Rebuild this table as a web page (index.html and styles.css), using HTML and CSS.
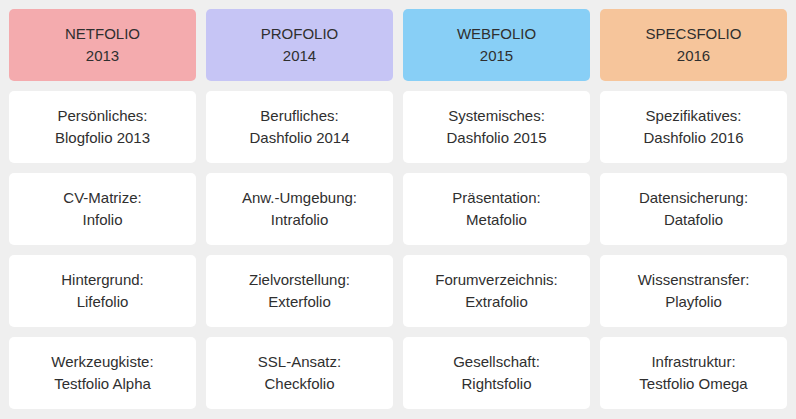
FILE: index.html
```html
<!DOCTYPE html>
<html lang="de">
<head>
<meta charset="utf-8">
<link rel="stylesheet" href="styles.css">
</head>
<body>
<div class="grid">
  <div class="card head h1">NETFOLIO<br>2013</div>
  <div class="card head h2">PROFOLIO<br>2014</div>
  <div class="card head h3">WEBFOLIO<br>2015</div>
  <div class="card head h4">SPECSFOLIO<br>2016</div>

  <div class="card">Persönliches:<br>Blogfolio 2013</div>
  <div class="card">Berufliches:<br>Dashfolio 2014</div>
  <div class="card">Systemisches:<br>Dashfolio 2015</div>
  <div class="card">Spezifikatives:<br>Dashfolio 2016</div>

  <div class="card">CV-Matrize:<br>Infolio</div>
  <div class="card">Anw.-Umgebung:<br>Intrafolio</div>
  <div class="card">Präsentation:<br>Metafolio</div>
  <div class="card">Datensicherung:<br>Datafolio</div>

  <div class="card">Hintergrund:<br>Lifefolio</div>
  <div class="card">Zielvorstellung:<br>Exterfolio</div>
  <div class="card">Forumverzeichnis:<br>Extrafolio</div>
  <div class="card">Wissenstransfer:<br>Playfolio</div>

  <div class="card">Werkzeugkiste:<br>Testfolio Alpha</div>
  <div class="card">SSL-Ansatz:<br>Checkfolio</div>
  <div class="card">Gesellschaft:<br>Rightsfolio</div>
  <div class="card">Infrastruktur:<br>Testfolio Omega</div>
</div>
</body>
</html>
```
FILE: styles.css
```css
html, body {
  margin: 0;
  padding: 0;
  background: #efefef;
}
body {
  font-family: "Liberation Sans", Arial, sans-serif;
  font-size: 15px;
  color: #2f2f2f;
}
.grid {
  display: grid;
  grid-template-columns: repeat(4, 187px);
  grid-auto-rows: 72px;
  gap: 10px;
  padding: 9px;
}
.card {
  background: #fff;
  border-radius: 5px;
  display: flex;
  align-items: center;
  justify-content: center;
  text-align: center;
  line-height: 22px;
}
.h1 { background: #f4abae; }
.h2 { background: #c6c5f5; }
.h3 { background: #88cff6; }
.h4 { background: #f6c59b; }
```
